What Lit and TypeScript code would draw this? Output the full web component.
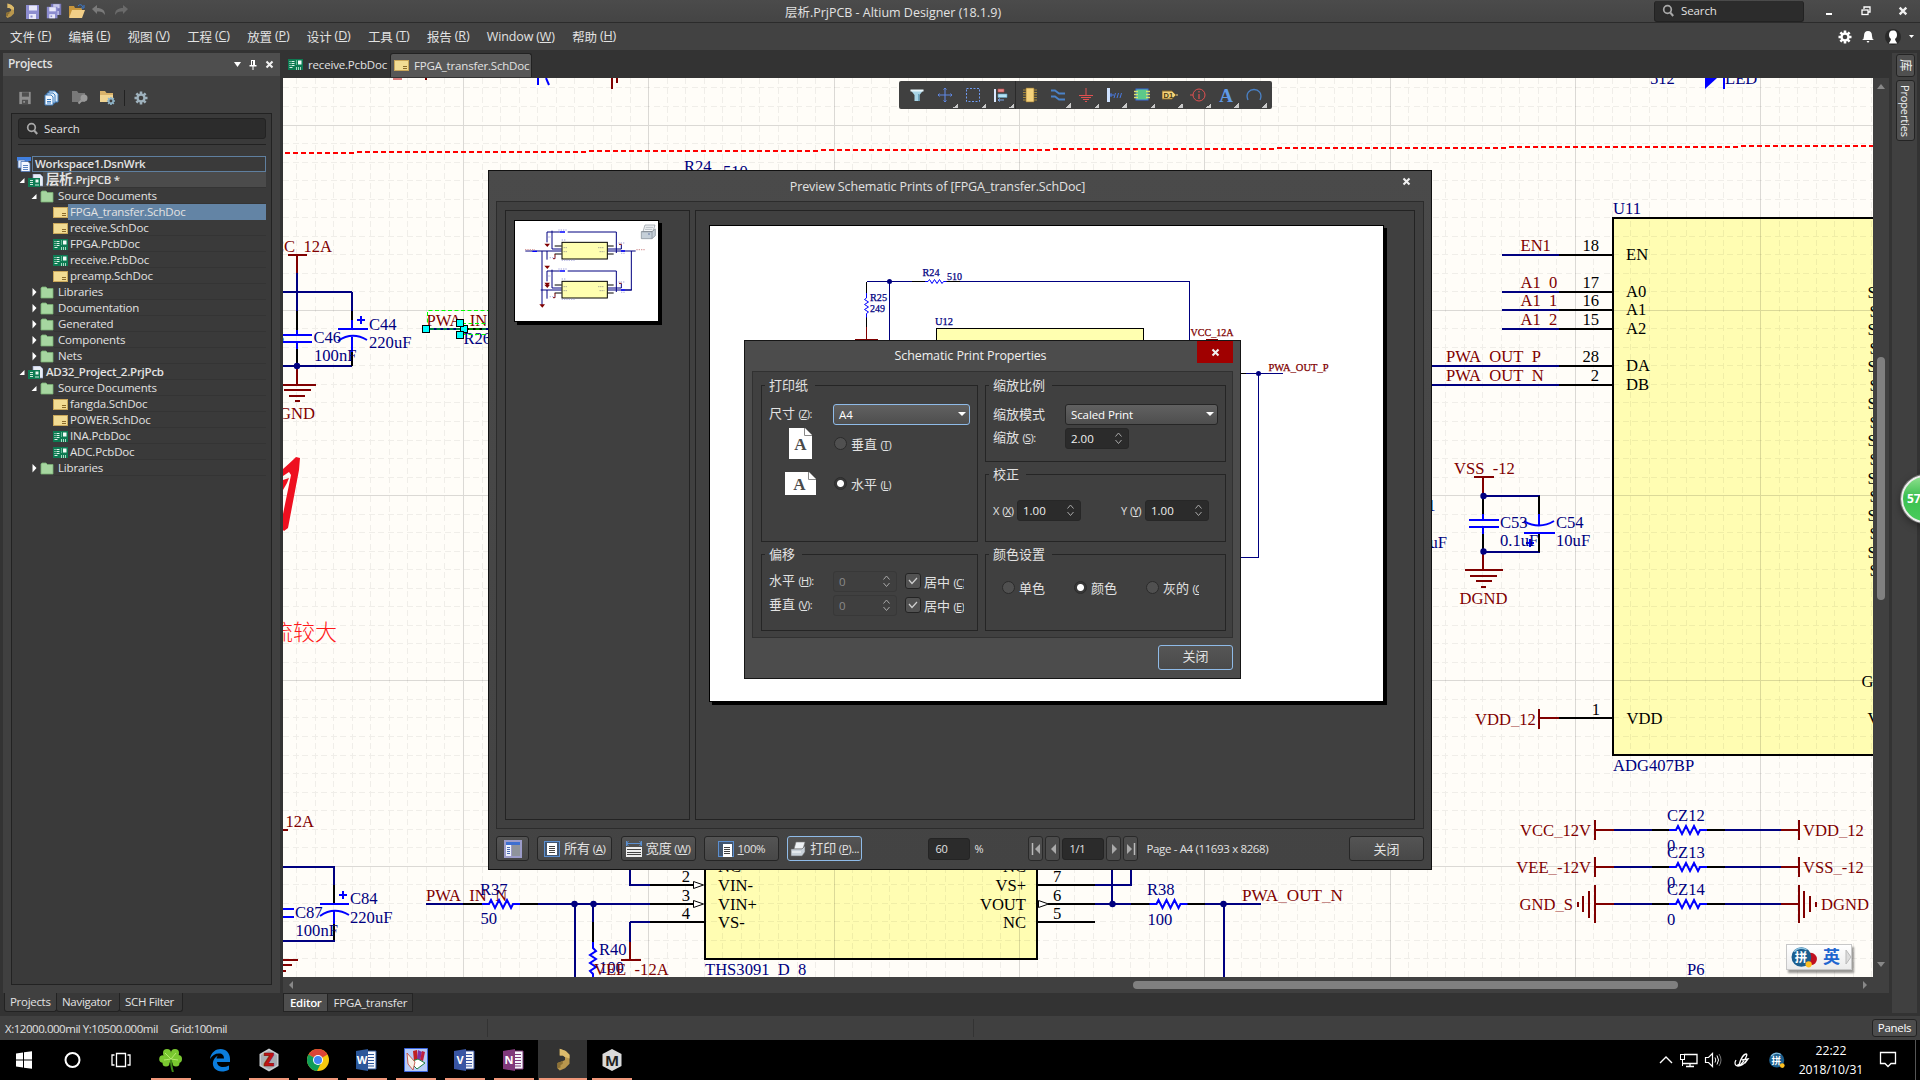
import { LitElement, html, svg, css } from "lit";
import { customElement } from "lit/decorators.js";
import { classMap } from "lit/directives/class-map.js";

const NAVY = "#000080";
const BLUE = "#0000ff";
const RED = "#800000";
const BLACK = "#000000";

const base = css`
  * { box-sizing: border-box; }
  :host {
    font-family: "Open Sans", "Noto Sans CJK SC", sans-serif;
    font-size: 11.5px;
    color: #e2e2e2;
    white-space: nowrap;
  }
  svg { display: block; flex: none; }
  u { text-underline-offset: 1px; }
`;

/* ---------- schematic drawing helpers ---------- */

const wire = (color: string, d: string, w = 2) =>
  svg`<path d=${d} fill="none" stroke=${color} stroke-width=${w} shape-rendering="crispEdges"/>`;
const curve = (color: string, d: string, w = 2) =>
  svg`<path d=${d} fill="none" stroke=${color} stroke-width=${w}/>`;
const node = (x: number, y: number, r = 3.2) => svg`<circle cx=${x} cy=${y} r=${r} fill=${NAVY}/>`;

/* "~" is a blank half-em, "_" is drawn faint */
const label = (x: number, y: number, text: string, color: string, anchor = "start", size = 16.6, len = 0) => {
  const parts = text.replace(/~/g, "\u00a0\u00a0").split("_");
  const body = parts.map((p, i) => (i ? svg`<tspan fill-opacity="0.45">_</tspan>${p}` : svg`${p}`));
  return len
    ? svg`<text x=${x} y=${y} fill=${color} text-anchor=${anchor} font-size=${size} textLength=${len} lengthAdjust="spacingAndGlyphs">${body}</text>`
    : svg`<text x=${x} y=${y} fill=${color} text-anchor=${anchor} font-size=${size}>${body}</text>`;
};
const resistor = (x: number, y: number) =>
  curve(BLUE, `M${x} ${y}h7l2-4 4 8 4-8 4 8 4-8 4 8 2-4h7`);
const plus = (x: number, y: number) => wire(BLUE, `M${x - 4} ${y}h8M${x} ${y - 4}v8`);
const handle = (x: number, y: number) =>
  svg`<rect x=${x - 3.5} y=${y - 3.5} width="7" height="7" fill="#00ffff" stroke="#000" stroke-width="1"/>`;

@customElement("schematic-canvas")
export class SchematicCanvas extends LitElement {
  static styles = [base, css`
    :host { display: block; width: 1590px; height: 899px; overflow: hidden; }
    text { font-family: "Liberation Serif", "Noto Sans CJK SC", serif; white-space: pre; }
    .note { font-family: "Noto Sans CJK SC", sans-serif; font-weight: 300; }
  `];

  private grid() {
    const minor: string[] = [];
    const major: string[] = [];
    for (let i = -2; i < 88; i++) {
      const x = Math.floor(278.2 + i * 18.53) + 0.5;
      if (i % 10 === 0) major.push(`M${x} 78V977`); else minor.push(`M${x} 78V977`);
    }
    for (let i = -3; i < 47; i++) {
      const y = Math.floor(125 + i * 18.53) + 0.5;
      if (i % 10 === 0) major.push(`M283 ${y}H1873`); else minor.push(`M283 ${y}H1873`);
    }
    return svg`
      <path d=${minor.join("")} fill="none" stroke="#000" stroke-opacity="0.06" stroke-dasharray="6 3.5" shape-rendering="crispEdges"/>
      <path d=${major.join("")} fill="none" stroke="#000" stroke-opacity="0.14" shape-rendering="crispEdges"/>`;
  }

  private jumper(y: number, name: string, left: string, right: string, ground = false) {
    return svg`
      ${wire(RED, `M1595 ${y}H1614M1781 ${y}H1799`)}
      ${wire(NAVY, `M1614 ${y}H1652M1725 ${y}H1781`)}
      ${wire(BLACK, `M1652 ${y}H1669M1707 ${y}H1725`)}
      ${resistor(1669, y)}
      ${ground
        ? wire(RED, `M1595 ${y - 19}v38M1589 ${y - 13}v27M1583 ${y - 8}v16M1578 ${y - 2}v5M1799 ${y - 19}v38M1804 ${y - 13}v27M1810 ${y - 8}v16M1816 ${y - 2}v5`)
        : wire(RED, `M1595 ${y - 10}v20M1799 ${y - 10}v20`)}
      ${label(ground ? 1573 : 1591, y + 5.5, left, RED, "end")}
      ${label(ground ? 1821 : 1803, y + 5.5, right, RED)}
      ${label(1667, y - 9.5, name, NAVY)}
      ${label(1667, y + 20.5, "0", NAVY)}`;
  }

  private pin(y: number, net: string, num: string, name: string, x0: number, xt: number) {
    return svg`
      ${wire(NAVY, `M${x0} ${y}H1559`)}${wire(BLACK, `M1559 ${y}H1613`)}
      ${label(xt, y - 3.7, net, RED)}
      ${label(1599, y - 3.7, num, BLACK, "end")}
      ${label(1626, y + 5.2, name, BLACK)}`;
  }

  render() {
    const s = Array.from({ length: 16 }, (_, i) => i);
    return html`<svg width="1590" height="899" viewBox="283 78 1590 899">
      <rect x="283" y="78" width="1590" height="899" fill="#fffdf8"/>
      <rect x="1614" y="218" width="300" height="537" fill="#fffdb2"/>
      <rect x="705" y="840" width="332" height="119" fill="#fffdb2"/>
      ${this.grid()}
      <path d="M285 153H356M357 152H589M589 151H821M821 150H1052M1053 149H1276M1277 148H1508M1509 147H1740M1741 146H1873"
        fill="none" stroke="#f00" stroke-width="2" stroke-dasharray="5 3" shape-rendering="crispEdges"/>

      ${wire("#d98080", "M393 78.5h9")}${wire(RED, "M425.5 78v2M612 78v11M617 78v5")}
      ${wire(BLUE, "M538 78v7")}${curve(BLUE, "M546 78l3 7")}
      ${label(1650, 84, "512", NAVY)}${label(1725, 84, "LED", NAVY)}
      <path d="M1705 78h12l-12 11z" fill=${BLUE}/>${wire(BLUE, "M1724 78v11")}

      ${label(332, 251.5, "VCC~12A", RED, "end")}
      ${wire(RED, "M288 255H307M297 255V273M297 366V385M283 385H316M284 390H311M289 396H305M295 401H300")}
      ${wire(NAVY, "M297 273V311M283 292H352M352 292V311M283 366H352")}
      ${wire(BLACK, "M297 311V330M352 311V320M297 349V366M352 352V366")}
      ${wire(BLUE, "M297 330V335M283 335H312M283 342H312M297 342V349M352 320V329M338 329H368M352 337V352")}
      ${curve(BLUE, "M338 341Q352 331 367 340")}
      ${plus(361, 320)}${node(297, 366)}
      ${label(369, 329.5, "C44", NAVY)}${label(369, 348, "220uF", NAVY)}
      ${label(313.5, 342.5, "C46", NAVY)}${label(314, 361, "100nF", NAVY)}
      ${label(284, 342.5, "C45", NAVY, "end")}
      ${label(315, 419, "DGND", RED, "end")}

      ${label(426.5, 325.5, "PWA~IN~P", RED)}${label(463.5, 344, "R26", NAVY)}
      ${wire(NAVY, "M427 329H464")}${wire(BLACK, "M464 329H482")}${wire(NAVY, "M482 329H490")}
      <path d="M427.5 329V310.5H490M462 323.5H490M462 334.5H490M430 329H490" fill="none" stroke="#00ff00" stroke-dasharray="4 2.5"/>
      ${handle(426, 329)}${handle(464, 329)}${handle(460, 323)}${handle(460, 335)}

      <path d="M283 469Q291 462 296 457L300 458L299 470L288 528L284 531L283 530V514L291 475L289 472L283 476Z" fill="#ee1020"/>
      <path d="M283 480L289 478L287 483L283 490Z" fill="#ee1020"/>
      <text class="note" x="337" y="640" text-anchor="end" font-size="22" fill="#ff1a1a">流较大</text>

      ${label(684, 171.5, "R24", NAVY)}${label(723, 177, "510", NAVY)}

      ${label(314, 826.5, "VCC~12A", RED, "end")}
      ${wire(RED, "M283 830H288M283 960H298M283 965H292M283 971H286")}
      ${wire(NAVY, "M283 867H335M334 867V885M283 941H335")}
      ${wire(BLACK, "M334 885V903M334 924V940")}
      ${wire(BLUE, "M320 904H349M334 911V924M283 909H294M283 917H294")}
      ${curve(BLUE, "M320 916Q334 906 349 915")}${plus(343, 895)}
      ${label(350, 904, "C84", NAVY)}${label(350, 922.5, "220uF", NAVY)}
      ${label(295, 917.5, "C87", NAVY)}${label(295.5, 935.5, "100nF", NAVY)}

      ${label(426, 900.5, "PWA~IN~N", RED)}${label(480, 894.5, "R37", NAVY)}${label(480.5, 924, "50", NAVY)}
      ${wire(NAVY, "M426 904H463M538 904H650M630 860V885M629 885H650M630 922H650M630 922V942M575 904V977M593 904V922")}
      ${wire(BLACK, "M463 904H482M520 904H538M650 904H693M650 885H693M650 922H705M593 922V942")}
      ${resistor(482, 904)}
      ${curve(BLUE, "M593 942v6l3 3-6 4 6 4-6 4 6 4-6 4 3 3v3")}
      ${wire(RED, "M630 942V960M621 960H641")}
      ${node(574.5, 904)}${node(593.5, 904)}
      ${label(599, 954.5, "R40", NAVY)}${label(599, 973, "100", NAVY)}${label(594, 974.5, "VEE~-12A", RED)}
      ${wire(BLACK, "M705 860V959H1037V860")}
      <path d="M693.5 881.5l10 3.5-10 3.5zM693.5 900.5l10 3.5-10 3.5zM1038.500 900.500l10 3.500-10 3.500z" fill="#fff" stroke="#000"/>
      ${label(690, 882, "2", BLACK, "end")}${label(690, 900.500, "3", BLACK, "end")}${label(690, 919, "4", BLACK, "end")}
      ${label(718, 872, "NC", BLACK)}${label(718, 891, "VIN-", BLACK)}${label(718, 909.500, "VIN+", BLACK)}${label(718, 928, "VS-", BLACK)}
      ${label(1026, 872, "NC", BLACK, "end")}${label(1026, 891, "VS+", BLACK, "end")}${label(1026, 909.500, "VOUT", BLACK, "end")}${label(1026, 928, "NC", BLACK, "end")}
      ${label(1053, 882, "7", BLACK)}${label(1053, 900.500, "6", BLACK)}${label(1053, 919, "5", BLACK)}
      ${wire(BLACK, "M1038 885H1095M1048 904H1095M1038 922H1095M1131 904H1150M1187 904H1205")}
      ${wire(NAVY, "M1095 885H1132M1131 860V885M1095 904H1131M1112 860V904M1205 904H1261M1224 904V977")}
      ${resistor(1149.5, 904)}${node(1112.5, 904)}${node(1223.5, 904)}
      ${label(1147, 894.500, "R38", NAVY)}${label(1147.500, 924.500, "100", NAVY)}
      ${label(1242, 900.500, "PWA_OUT_N", RED, "start", 16.600, 101)}
      ${label(705, 975, "THS3091~D~8", NAVY)}

      ${wire(BLACK, "M1900 218H1613V755H1900")}
      ${label(1613, 214, "U11", NAVY)}${label(1613, 771, "ADG407BP", NAVY)}
      ${this.pin(255, "EN1", "18", "EN", 1502, 1520.5)}
      ${this.pin(292, "A1~0", "17", "A0", 1502, 1520.5)}
      ${this.pin(310, "A1~1", "16", "A1", 1502, 1520.5)}
      ${this.pin(329, "A1~2", "15", "A2", 1502, 1520.5)}
      ${this.pin(366, "PWA~OUT~P", "28", "DA", 1432, 1446)}
      ${this.pin(385, "PWA~OUT~N", "2", "DB", 1432, 1446)}
      ${s.map((i) => label(i % 2 ? 1869.5 : 1867.5, 298 + i * 18.55, "S", BLACK))}
      ${label(1861.5, 687, "G", BLACK)}${label(1867.5, 724, "V", BLACK)}

      ${label(1454, 473.5, "VSS~-12", RED)}
      ${wire(RED, "M1474 477H1494M1483 477V496M1483 552V570M1465 570H1503M1470 576H1497M1476 581H1492M1481 587H1486")}
      ${wire(NAVY, "M1483 496H1540M1483 552H1540")}
      ${wire(BLACK, "M1483 496V514M1483 534V552M1539 496V514M1539 534V552")}
      ${wire(BLUE, "M1483 514V520M1469 520H1499M1469 527H1499M1483 527V534M1539 514V526M1524 533H1555")}
      ${curve(BLUE, "M1524 521Q1539 530 1554 521")}${plus(1530, 543)}
      ${node(1483.5, 496)}${node(1483.500, 551.500)}
      ${label(1500, 527.500, "C53", NAVY)}${label(1500, 546, "0.1uF", NAVY)}
      ${label(1556, 527.500, "C54", NAVY)}${label(1556, 546, "10uF", NAVY)}
      ${label(1459.500, 604, "DGND", RED)}
      ${label(1435.500, 511, "1", NAVY, "end")}${label(1447, 548, "uF", NAVY, "end")}

      ${label(1475, 724.500, "VDD_12", RED)}
      ${wire(RED, "M1539 709V729M1539 718H1559")}${wire(BLACK, "M1559 718H1613")}
      ${label(1600, 715, "1", BLACK, "end")}${label(1626.500, 724.300, "VDD", BLACK)}

      ${this.jumper(830, "CZ12", "VCC_12V", "VDD_12")}
      ${this.jumper(867, "CZ13", "VEE_-12V", "VSS_-12")}
      ${this.jumper(904, "CZ14", "GND_S", "DGND", true)}
      ${label(1687, 974.500, "P6", NAVY)}
    </svg>`;
  }
}

/* ---------- small icons ---------- */

const schIcon = svg`<rect x=".5" y="1.500" width="14" height="10" fill="#f2dc93" stroke="#c9a75a"/><path d="M9 7.500h4M9 9.500h4" stroke="#8a6a2a"/>`;
const pcbIcon = svg`<rect x="0" y="1" width="15" height="11" fill="#0d7a52"/><path d="M1.500 3.500h1M3.500 3.500h3M1.500 5.500h1M3.500 5.500h3M1.500 7.500h1M3.500 7.500h3M1.500 9.500h3" stroke="#dff2e9"/><rect x="10" y="2.500" width="3.500" height="4" fill="#f2fbf7"/><path d="M8.500 2v5" stroke="#5fb592"/><path d="M8.500 12V9M10.500 12V9M12.500 12V9" stroke="#a9d8c3"/>`;
const folderIcon = svg`<path d="M1 2l1-1h4l1.500 1.500H13V12H1z" fill="#a6d6a0" stroke="#79b074" stroke-width=".8"/>`;
const projIcon = svg`<path d="M5 0h7l3 3v9H5z" fill="#e9edf6" stroke="#8f9fc4" stroke-width=".7"/><rect x="0" y="4" width="12" height="9" fill="#0d7a52"/><path d="M2 6.500h3M2 8.500h3M2 10.500h3M8 12v-2M10 12v-2" stroke="#cfe8dc"/><rect x="7.500" y="5.500" width="3" height="3" fill="#e8f6ef"/>`;
const wsIcon = svg`<path d="M0 0h14v4H0z" fill="#3f7fe0"/><path d="M1 3h7v8H1z" fill="#dfe9fb" stroke="#4a74b8" stroke-width=".8"/><path d="M4 4.500h7l2 2v8H4z" fill="#f4f8ff" stroke="#4a74b8" stroke-width=".8"/><path d="M6 8.500h5M6 10.500h5M6 12.500h5" stroke="#5a83c0"/>`;
const gear = (c: string, hole: string) => svg`<circle cx="8" cy="8" r="4.600" fill=${c}/><path d="M8 1.500v13M1.500 8h13M3.400 3.400l9.200 9.200M12.600 3.400l-9.200 9.200" stroke=${c} stroke-width="2.600"/><circle cx="8" cy="8" r="2.300" fill=${hole}/>`;
const floppy = (c: string, d: string) => svg`<path d="M1 1h13v14H1z" fill=${c}/><path d="M4 1.500h8v5H4z" fill=${d}/><path d="M4 10h7v5H4z" fill=${d}/><path d="M5.500 11.500h2v2h-2z" fill=${c}/>`;
const altium = svg`<path d="M4.500.5L8.500 2l2.500 2.500v6L8 13.500 4.500 15 3 13.500V10l3-1 2-1V6L6.500 5H4.500z" fill="#b9974d"/><path d="M4.500.5L8.500 2 11 4.500V7L8 6 6.500 5H4.500z" fill="#dcbb6c"/><path d="M3 10l3.500-1.500v2L5 11.500v1.500l-2 .5z" fill="#8c7035"/>`;
const lens = svg`<circle cx="5.500" cy="5.500" r="3.800" fill="none" stroke="#a8a8a8" stroke-width="1.700"/><path d="M8.200 8.500l3 3.500" stroke="#a8a8a8" stroke-width="2"/>`;
const cross = svg`<path d="M1.500 1.500l6 6M7.500 1.500l-6 6" stroke="#f0f0f0" stroke-width="2.100"/>`;

const ico = (body: unknown, w = 16, h = 16, vb = `0 0 ${w} ${h}`) => html`<svg width=${w} height=${h} viewBox=${vb}>${body}</svg>`;

/* ---------- projects panel ---------- */

type Kind = "ws" | "proj" | "folder" | "sch" | "pcb";
interface Row { d: number; k: Kind; t: string; open?: boolean; sel?: boolean }
const rows: Row[] = [
  { d: 0, k: "ws", t: "Workspace1.DsnWrk" },
  { d: 1, k: "proj", t: "层析.PrjPCB *", open: true },
  { d: 2, k: "folder", t: "Source Documents", open: true },
  { d: 3, k: "sch", t: "FPGA_transfer.SchDoc", sel: true },
  { d: 3, k: "sch", t: "receive.SchDoc" },
  { d: 3, k: "pcb", t: "FPGA.PcbDoc" },
  { d: 3, k: "pcb", t: "receive.PcbDoc" },
  { d: 3, k: "sch", t: "preamp.SchDoc" },
  { d: 2, k: "folder", t: "Libraries", open: false },
  { d: 2, k: "folder", t: "Documentation", open: false },
  { d: 2, k: "folder", t: "Generated", open: false },
  { d: 2, k: "folder", t: "Components", open: false },
  { d: 2, k: "folder", t: "Nets", open: false },
  { d: 1, k: "proj", t: "AD32_Project_2.PrjPcb", open: true },
  { d: 2, k: "folder", t: "Source Documents", open: true },
  { d: 3, k: "sch", t: "fangda.SchDoc" },
  { d: 3, k: "sch", t: "POWER.SchDoc" },
  { d: 3, k: "pcb", t: "INA.PcbDoc" },
  { d: 3, k: "pcb", t: "ADC.PcbDoc" },
  { d: 2, k: "folder", t: "Libraries", open: false },
];
const kindIcon = { ws: wsIcon, proj: projIcon, folder: folderIcon, sch: schIcon, pcb: pcbIcon };

@customElement("projects-panel")
export class ProjectsPanel extends LitElement {
  static styles = [base, css`
    :host { display: flex; flex-direction: column; width: 277px; height: 940px; background: #404040; }
    .head { height: 23px; background: #4e4e4e; display: flex; align-items: center; padding: 0 6px 0 5px; font-weight: 600; font-size: 12px; gap: 8px; }
    .head span { flex: 1; letter-spacing: -0.3px; line-height: 21px; height: 23px; }
    .tools { height: 37px; display: flex; align-items: center; gap: 12px; padding: 7px 0 0 15px; }
    .sep { width: 1px; height: 16px; background: #222; margin: 0 -4px; }
    .box { width: 261px; height: 872px; margin-left: 8px; border: 1px solid #222; background: #3a3a3a; padding: 4px 5px 0 5px; }
    .search { height: 21px; background: #2c2c2c; border: 1px solid #232323; border-radius: 3px; display: flex; align-items: center; gap: 7px; padding: 0 0 1px 7px; margin-left: 1px; }
    .search span { letter-spacing: -0.1px; margin-left: -1px; }
    .line { height: 1px; background: #222; margin: 5px 0 11px 1px; }
    .row { height: 16px; display: flex; align-items: center; }
    .d1 { padding-left: 2px; } .d2 { padding-left: 14px; } .d3 { padding-left: 36px; }
    .arrow { width: 9px; height: 12px; flex: none; }
    .t { flex: 1; height: 16px; line-height: 15px; border-bottom: 1px solid #343434; padding-left: 2px; letter-spacing: -0.17px; }
    .d2 .t { padding-left: 4px; }
    .sel .t { background: #6384a5; border-color: #6384a5; }
    .proj .t, .ws .t { font-weight: 600; letter-spacing: -0.25px; }
    .proj .t { padding-left: 3px; }
    .hot .t { background: #4b4b4b; }
    .ws .t { border: 1px solid #5f7f9f; line-height: 14px; padding-left: 2px; }
    .cn { font-size: 13.5px; }
  `];
  render() {
    return html`
      <div class="head"><span>Projects</span>
        ${ico(svg`<path d="M0 1h7l-3.500 5z" fill="#fff"/>`, 7, 7)}
        ${ico(svg`<path d="M2 0h4v5h1.500v1.500H.5V5H2zM3.500 6h1v4h-1z" fill="#fff"/><path d="M3.500 1v4" stroke="#4e4e4e"/>`, 8, 10)}
        ${ico(cross, 9, 9)}
      </div>
      <div class="tools">
        ${ico(floppy("#8f8f8f", "#505050"), 14, 14, "0 0 15 16")}
        ${ico(svg`<path d="M5 1h6l3 3v8H5z" fill="#dcebf8" stroke="#3f7fc0"/><path d="M3 3h6l2 2v8H3z" fill="#dcebf8" stroke="#3f7fc0"/><path d="M1 5h6l2 2v8H1z" fill="#f2f8ff" stroke="#3f7fc0"/><path d="M3 9.500h4M3 11.500h4M3 13h4" stroke="#3f7fc0"/>`)}
        ${ico(svg`<path d="M0 1h5l1.500 2H13v9H0z" fill="#787878"/><circle cx="12" cy="8" r="3.500" fill="#9a9a9a"/><path d="M9.500 10.500l-3 3" stroke="#9a9a9a" stroke-width="2"/>`)}
        ${ico(svg`<path d="M0 1h5l1.500 2H13v9H0z" fill="#d9b26a"/><path d="M0 5h13v7H0z" fill="#f0d492"/><g transform="translate(6 6) scale(.62)">${gear("#8fb4c8", "#404040")}</g>`)}
        <div class="sep"></div>
        ${ico(gear("#9fb2bd", "#404040"))}
      </div>
      <div class="box">
        <div class="search">${ico(lens, 12, 13)}<span>Search</span></div>
        <div class="line"></div>
        ${rows.map((r, i) => html`<div class=${classMap({ row: true, [`d${r.d}`]: true, [r.k]: true, sel: !!r.sel, hot: i === 1 })}>
          ${r.open === undefined ? "" : html`<svg class="arrow" viewBox="0 0 9 12">${r.open
            ? svg`<path d="M5.500 4v5h-5z" fill="#fff"/>` : svg`<path d="M1.500 2l4 4-4 4.500z" fill="#fff"/>`}</svg>`}
          ${ico(kindIcon[r.k], r.k === "folder" ? 14 : 15, r.k === "ws" ? 15 : 13)}
          <div class="t">${i === 1 ? html`<span class="cn">层析</span>.PrjPCB *` : r.t}</div>
        </div>`)}
      </div>`;
  }
}

/* ---------- print preview window ---------- */

@customElement("print-preview")
export class PrintPreview extends LitElement {
  static styles = [base, css`
    :host { display: flex; flex-direction: column; width: 944px; height: 700px; border: 1px solid #111; background: linear-gradient(#4a4a4a, #434343); padding: 0 7px; font-size: 12px; }
    .title { height: 30px; display: flex; align-items: center; font-size: 12.5px; }
    .title span { flex: 1; text-align: center; padding-right: 23px; letter-spacing: -0.12px; line-height: 29px; }
    .x { align-self: flex-start; padding: 6px 0 0 0; width: 22px; }
    .inner { height: 628px; border: 1px solid #2c2c2c; background: #404040; display: flex; gap: 5px; padding: 8px; }
    .pane { border: 1px solid #232323; }
    .left { width: 185px; padding: 9px 0 0 8px; }
    .right { width: 721px; padding: 14px 0 0 13px; }
    .sheet { background: #fff; border: 1px solid #000; }
    .thumb { width: 145px; height: 102px; box-shadow: 3px 3px 0 #000; }
    .page { width: 675px; height: 477px; box-shadow: 3px 3px 0 #000; }
    .page text { font-family: "Liberation Serif", serif; stroke-width: .25px; paint-order: stroke; }
    .bar { display: flex; align-items: center; height: 39px; }
    .btn { height: 25px; border: 1px solid #262626; border-radius: 3px; background: linear-gradient(#545454, #484848); display: flex; align-items: center; justify-content: center; gap: 4px; margin-right: 8.300px; width: 75px; font-size: 11.5px; letter-spacing: -0.4px; line-height: 22px; }
    .btn b { font-weight: 400; font-size: 13px; letter-spacing: 0; }
    .btn.ic { width: 33px; }
    .btn.hot { border-color: #8fbbe8; }
    .btn.last { margin: 0 0 0 auto; }
    .field { width: 42px; height: 22px; background: #2b2b2b; border: 1px solid #242424; border-radius: 3px; font-size: 11px; display: flex; align-items: center; padding-left: 6px; letter-spacing: -0.3px; }
    .nav { width: 15px; height: 25px; border: 1px solid #2a2a2a; border-radius: 3px; background: #4c4c4c; display: flex; align-items: center; justify-content: center; margin-right: 2px; }
    .zoom { margin-left: 58px; }
    .pct { width: 58px; padding-left: 4px; font-size: 11px; }
    .pages { margin: 0 2px 0 0; }
    .info { padding-left: 6px; font-size: 11.5px; letter-spacing: -0.36px; }
  `];
  private half(dy: number, extra: number) {
    return svg`<g transform=${`translate(0 ${dy})`}>
      <path d="M202 248V217H240M264 217H410V280M217 213V268H246M137 274H246M202 274V300M384 268H425V255M384 274H468" fill="none" stroke="#000080" stroke-width="3"/>
      <path d="M225 259H246M225 283H246M384 259H402M384 283H402" stroke="#000" stroke-width="3"/>
      <path d="M240 217H256M158 275H172M424 274H436" stroke="#0000ff" stroke-width="4"/>
      <path d="M226 283v14h-6M418 254h8" fill="none" stroke="#800000" stroke-width="3"/>
      <path d="M194 252h17l-8 10zM194 ${318 - extra}h17l-8 10z" fill="#800000"/>
      <rect x="247" y="248" width="136" height="50" fill="#ffffb0" stroke="#000" stroke-width="3"/>
      <path d="M236 211h28M206 232h10M246 241h12M416 250h20M210 294h18M246 302h40M424 281h14" stroke="#9a9ad8" stroke-width="4" stroke-dasharray="4 3" opacity=".6"/>
      <path d="M252 264h12M356 264h18M252 276h12M360 276h14" stroke="#888" stroke-width="3" stroke-dasharray="3 3"/>
    </g>`;
  }
  render() {
    return html`
      <div class="title"><span>Preview Schematic Prints of [FPGA_transfer.SchDoc]</span><div class="x">${ico(cross, 9, 9)}</div></div>
      <div class="inner">
        <div class="pane left"><div class="sheet thumb">
          <svg width="143" height="100" viewBox="106 184 429 300">
            ${this.half(0, 0)}${this.half(117, 60)}
            <rect x="133" y="380" width="50" height="24" fill="#fff"/>
            <rect x="457" y="380" width="30" height="24" fill="#fff"/>
            <path d="M187 274V436M455 274V391H436" fill="none" stroke="#000080" stroke-width="3"/>
            <path d="M179 434h17l-8 10z" fill="#800000"/>
            <path d="M136 270h30M470 270h28" stroke="#d8a0a0" stroke-width="4" stroke-dasharray="4 3"/>
            <path d="M496 196h30l-6 20h-30z" fill="#f2f4f6" stroke="#8a929a" stroke-width="2"/>
            <path d="M498 203h22M496 209h22" stroke="#9aa2aa" stroke-width="2"/>
            <path d="M485 216h32l10-8v20l-10 9h-32z" fill="#c5cfd8" stroke="#7d868f" stroke-width="2"/>
            <path d="M485 216h32v21" fill="none" stroke="#7d868f" stroke-width="2"/><circle cx="508" cy="223" r="2" fill="#405a90"/>
          </svg></div></div>
        <div class="pane right"><div class="sheet page">
          <svg width="673" height="475" viewBox="710 226 673 475">
            <rect x="936.500" y="328.500" width="207" height="60" fill="#ffffb0" stroke="#000"/>
            ${wire(NAVY, "M866.500 281.500H925M957 281.500H1189.500V345M889.500 281.500V345M1258.500 373.500V557.500H1241M1246 373.500H1283", 1)}
            ${wire(BLACK, "M866.500 282V293M866.500 315V327M912 281.500H925M945 281.500H960M1241 373.500H1246", 1)}
            ${wire(RED, "M866.500 327V339.500M855 339.500H878M1206 339.500H1218", 1)}
            ${curve(BLUE, "M925 281.500h3l1.500-2 2.500 4 2.500-4 2.500 4 2.500-4 2.500 4 1.500-2h3M866.500 293v5l-2 1.500 4 2.500-4 2.500 4 2.500-4 2.500 4 2.500-2 1.500v4", 1)}
            ${node(889.500, 281.500, 2.500)}${node(1258.500, 373.500, 2.500)}
            <g stroke=${NAVY}>
              ${label(922.500, 275.500, "R24", NAVY, "start", 10.500, 17)}
              ${label(947, 279.500, "510", NAVY, "start", 10.500, 15)}
              ${label(870, 301, "R25", NAVY, "start", 10.500, 17)}
              ${label(870, 312, "249", NAVY, "start", 10.500, 15)}
              ${label(935, 325, "U12", NAVY, "start", 10.500, 18)}
            </g>
            <g stroke=${RED}>
              ${label(1190.500, 336, "VCC_12A", RED, "start", 10.500, 43)}
              ${label(1268.500, 371, "PWA_OUT_P", RED, "start", 10.500, 60)}
            </g>
          </svg></div></div>
      </div>
      <div class="bar">
        <div class="btn ic">${ico(svg`<rect width="18" height="18" fill="#9c9cc8"/><path d="M2 2h14v3H2z" fill="#3d6fd0"/><path d="M2 5h5v11H2z" fill="#eef2fb"/><path d="M8 5h8v11H8z" fill="#8f949b"/><path d="M3 7.500h3M3 9.500h3M3 11.500h3M3 13.500h3" stroke="#4a6ab0"/>`, 18, 18)}</div>
        <div class="btn">${ico(svg`<rect x=".5" y=".5" width="15" height="15" fill="#42556e" stroke="#5b8fd0"/><path d="M3 2h10v12H3z" fill="#fff"/><path d="M5 5.500h6M5 7.500h6M5 9.500h6M5 11.500h6" stroke="#444"/>`)}<span><b>所有</b> (<u>A</u>)</span></div>
        <div class="btn">${ico(svg`<path d="M0 2.500h16M2.500 0L.5 2.500l2 2.500M13.500 0l2 2.500-2 2.500M.5 0v5M15.500 0v5" fill="none" stroke="#5b8fd0"/><path d="M0 6h16v10H0z" fill="#eee"/><path d="M1 8.500h14M1 11.500h14M1 13.500h14" stroke="#444"/>`)}<span><b>宽度</b> (<u>W</u>)</span></div>
        <div class="btn">${ico(svg`<rect x=".5" y=".5" width="15" height="15" fill="#42556e" stroke="#5b8fd0"/><path d="M5 3h9v13H5z" fill="#fff"/><path d="M6 6.500h6M6 8.500h6M6 10.500h6M6 12.500h6" stroke="#444"/>`)}<span><u>1</u>00%</span></div>
        <div class="btn hot">${ico(svg`<path d="M6 1h9l-2 7H4z" fill="#eef1f4" stroke="#777" stroke-width=".6"/><path d="M1 8h11l3-3v6l-3 4H1z" fill="#c9d2da" stroke="#666" stroke-width=".6"/><path d="M2 11h9" stroke="#fff"/>`)}<span><b>打印</b> (<u>P</u>)...</span></div>
        <div class="field zoom">60</div><div class="pct">%</div>
        <div class="nav">${ico(svg`<path d="M1.500 0v12" stroke="#bbb" stroke-width="1.500"/><path d="M9 1v10L4 6z" fill="#aaa"/>`, 10, 12)}</div>
        <div class="nav">${ico(svg`<path d="M8 1v10L3 6z" fill="#aaa"/>`, 10, 12)}</div>
        <div class="field pages">1/1</div>
        <div class="nav">${ico(svg`<path d="M3 1v10l5-5z" fill="#aaa"/>`, 10, 12)}</div>
        <div class="nav">${ico(svg`<path d="M8.500 0v12" stroke="#bbb" stroke-width="1.500"/><path d="M1 1v10l5-5z" fill="#aaa"/>`, 10, 12)}</div>
        <div class="info">Page - A4 (11693 x 8268)</div>
        <div class="btn last"><b>关闭</b></div>
      </div>`;
  }
}

/* ---------- print properties window ---------- */

@customElement("print-properties")
export class PrintProperties extends LitElement {
  static styles = [base, css`
    :host { display: flex; flex-direction: column; width: 497px; height: 339px; border: 1px solid #161616; background: #4c4c4c; padding: 0 7px; font-size: 13px; }
    .title { height: 30px; display: flex; font-size: 12.5px; color: #f0f0f0; }
    .title span { flex: 1; text-align: center; line-height: 29px; padding-right: 44px; letter-spacing: -0.1px; }
    .x { width: 36px; height: 22px; background: #a00000; display: flex; align-items: center; justify-content: center; margin-left: -36px; }
    .inner { height: 267px; border: 1px solid #313131; background: #404040; display: flex; gap: 7px; padding: 13px 6px 0 8px; }
    .col { display: flex; flex-direction: column; gap: 12px; width: 217px; }
    .col.wide { width: 241px; }
    .g { border: 1px solid #252525; padding: 0 7px; display: flex; flex-direction: column; }
    .h157 { height: 157px; } .h77 { height: 77px; } .h68 { height: 68px; }
    .lg { align-self: flex-start; height: 20px; line-height: 19px; margin: -10px 0 0 -4px; padding: 0 7px 0 4px; background: #404040; }
    small { font-size: 11px; letter-spacing: -0.6px; }
    .r { display: flex; align-items: center; }
    .lab { width: 64px; line-height: 18px; padding-bottom: 1px; }
    .wide .lab { width: 72px; }
    .sel { height: 21px; border: 1px solid #262626; border-radius: 3px; background: linear-gradient(#616161, #4e4e4e); display: flex; align-items: center; justify-content: space-between; padding: 0 3px 0 5px; font-size: 11.5px; color: #fff; letter-spacing: -0.1px; }
    .sel.a { width: 137px; border-color: #8fbbe8; }
    .sel.b { width: 153px; }
    .spin { width: 64px; height: 21px; border: 1px solid #272727; border-radius: 3px; background: #2b2b2b; display: flex; align-items: center; justify-content: space-between; padding: 0 6px 0 5px; font-size: 11.5px; color: #f0f0f0; }
    .spin.off { background: #3f3f3f; color: #8a8a8a; border-color: #383838; }
    .m11 { margin-top: 7px; height: 22px; } .m3 { margin-top: 2px; height: 22px; }
    .radio { width: 13px; height: 13px; border-radius: 50%; background: #505050; border: 1px solid #2b2b2b; margin-right: 4px; flex: none; }
    .radio.on { background: radial-gradient(circle, #fff 0 3px, #383838 4px); }
    .pic { width: 65px; display: flex; justify-content: center; padding-right: 2px; }
    .chk { width: 16px; height: 16px; border: 1px solid #242424; border-radius: 3px; background: #525252; margin: 0 3px 0 8px; flex: none; }
    .clip { width: 40px; overflow: hidden; }
    .clip.gray { width: 36px; }
    .xy { margin-top: 14px; height: 22px; font-size: 11px; }
    .xy span { width: 24px; } .xy .y { margin-left: 40px; }
    .p1 { height: 32px; margin-top: 2px; } .p2 { height: 24px; margin-top: 12px; }
    .o1 { height: 24px; margin-top: 4px; } .o2 { height: 24px; }
    .colors { margin-top: 10px; height: 24px; padding-left: 9px; }
    .colors span { width: 55px; }
    .foot { display: flex; justify-content: flex-end; padding-top: 7px; }
    .close { width: 75px; height: 25px; border: 1px solid #8fbbe8; border-radius: 3px; background: linear-gradient(#565656, #4a4a4a); text-align: center; line-height: 21px; }
  `];
  private spin(v: string, off = false) {
    return html`<div class=${classMap({ spin: true, off })}>${v}${ico(svg`<path d="M.5 4.500l3-3.500 3 3.500M.5 8l3 3.500 3-3.500" fill="none" stroke="#a8a8a8"/>`, 7, 13)}</div>`;
  }
  private caret = ico(svg`<path d="M0 1h8L4 5z" fill="#fff"/>`, 8, 6);
  private check = html`<div class="chk">${ico(svg`<path d="M3 6l3 3.500L11 4" fill="none" stroke="#d0d0d0" stroke-width="1.200"/>`, 14, 14)}</div>`;
  render() {
    return html`
      <div class="title"><span>Schematic Print Properties</span><div class="x">${ico(cross, 9, 9)}</div></div>
      <div class="inner">
        <div class="col">
          <div class="g h157"><div class="lg">打印纸</div>
            <div class="r m11"><div class="lab">尺寸 <small>(<u>Z</u>):</small></div><div class="sel a">A4${this.caret}</div></div>
            <div class="r p1"><div class="pic"><svg width="23" height="31" viewBox="0 0 23 31"><path d="M0 0h16l7 7v24H0z" fill="#fff"/><path d="M15.500 0v7.500H23" fill="none" stroke="#888"/><text x="11.500" y="22" text-anchor="middle" font-family="Liberation Serif" font-weight="700" font-size="17" fill="#4a4a4a">A</text></svg></div><div class="radio"></div><span>垂直 <small>(<u>T</u>)</small></span></div>
            <div class="r p2"><div class="pic"><svg width="31" height="23" viewBox="0 0 31 23"><path d="M0 0h24l7 7v16H0z" fill="#fff"/><path d="M23.500 0v7.500H31" fill="none" stroke="#888"/><text x="14.500" y="18" text-anchor="middle" font-family="Liberation Serif" font-weight="700" font-size="17" fill="#4a4a4a">A</text></svg></div><div class="radio on"></div><span>水平 <small>(<u>L</u>)</small></span></div>
          </div>
          <div class="g h77"><div class="lg">偏移</div>
            <div class="r o1"><div class="lab">水平 <small>(<u>H</u>):</small></div>${this.spin("0", true)}${this.check}<div class="clip">居中 <small>(<u>C</u>)</small></div></div>
            <div class="r o2"><div class="lab">垂直 <small>(<u>V</u>):</small></div>${this.spin("0", true)}${this.check}<div class="clip">居中 <small>(<u>E</u>)</small></div></div>
          </div>
        </div>
        <div class="col wide">
          <div class="g h77"><div class="lg">缩放比例</div>
            <div class="r m11"><div class="lab">缩放模式</div><div class="sel b">Scaled Print${this.caret}</div></div>
            <div class="r m3"><div class="lab">缩放 <small>(<u>S</u>):</small></div>${this.spin("2.00")}</div>
          </div>
          <div class="g h68"><div class="lg">校正</div>
            <div class="r xy"><span>X <small>(<u>X</u>)</small></span>${this.spin("1.00")}<span class="y">Y <small>(<u>Y</u>)</small></span>${this.spin("1.00")}</div>
          </div>
          <div class="g h77"><div class="lg">颜色设置</div>
            <div class="r colors"><div class="radio"></div><span>单色</span><div class="radio on"></div><span>颜色</span><div class="radio"></div><div class="clip gray">灰的 <small>(<u>G</u>)</small></div></div>
          </div>
        </div>
      </div>
      <div class="foot"><div class="close">关闭</div></div>`;
  }
}

/* ---------- floating tool strip ---------- */

const strip: [unknown, boolean][] = [
  [svg`<path d="M1.500 3h13l-4 5v6h-5V8z" fill="#a8d4e6"/><path d="M1.500 2.500h13v2h-13z" fill="#e8f6fb"/><path d="M9 7v7h1.500V7z" fill="#6fa6c0"/>`, false],
  [svg`<path d="M8 1v14M1 8h14" stroke="#5f86e0" stroke-width="1.100"/><path d="M6.500 2.500L8 1l1.500 1.500M6.500 13.500L8 15l1.500-1.500M2.500 6.500L1 8l1.500 1.500M13.500 6.500L15 8l-1.500 1.500" fill="none" stroke="#5f86e0"/>`, true],
  [svg`<rect x="1.500" y="1.500" width="13" height="13" fill="none" stroke="#6f9af0" stroke-dasharray="2 1.500"/>`, true],
  [svg`<path d="M2 2v13" stroke="#dbe9ff" stroke-width="2"/><path d="M5 2h6v3H5z" fill="#e88a8a" stroke="#b84a4a" stroke-width=".6"/><path d="M5 7h9v3.500H5z" fill="#b5e2f2" stroke="#5a9ac0" stroke-width=".6"/><path d="M5 13h6M7 11.500L5 13l2 1.500" stroke="#7da6e8" fill="none"/>`, true],
  [svg`<path d="M1 3h14M1 5.500h14M1 8h14M1 10.500h14M1 13h14" stroke="#a88a3a"/><path d="M4 1h8v14H4z" fill="#f5d27a" stroke="#8a6a2a" stroke-width=".6"/>`, false],
  [svg`<path d="M1 3.500h4l4 3h6M1 9.500h4l4 3h6" fill="none" stroke="#4a82c8" stroke-width="1.800"/>`, true],
  [svg`<path d="M8 1v7M1 8.500h14M3 10.500h10M5 12.500h6M7 14.500h2" stroke="#e05050"/>`, true],
  [svg`<path d="M1 1h3v14H1z" fill="#cfe2ff"/><path d="M4 8h4M8 11l1.500-5M11 11l1.500-5M14 11l1.500-5M5 6v4" stroke="#4a7ae0"/>`, true],
  [svg`<rect x="2" y="2" width="12" height="11" fill="#5cc88a" stroke="#3a6ae0"/><path d="M0 4.500h4M0 7.500h4M0 10.500h4M12 4.500h4M12 7.500h4M12 10.500h4" stroke="#d8e070" stroke-width="1.500"/>`, true],
  [svg`<path d="M0 4h10l4 4-4 4H0z" fill="#f5d27a" stroke="#8a6a2a"/><path d="M14 8h2" stroke="#f5d27a"/><text x="1.500" y="11" font-size="7.500" font-weight="700" font-family="Liberation Sans" fill="#4a3a10">D1</text>`, true],
  [svg`<circle cx="9" cy="8" r="6" fill="none" stroke="#e05050"/><path d="M0 8h3M9 7v5M9 4v1.500" stroke="#e05050" stroke-width="1.200"/>`, true],
  [svg`<text x="8" y="14.500" text-anchor="middle" font-size="19" font-weight="700" font-family="Liberation Serif" fill="#5f9ae8">A</text>`, true],
  [svg`<path d="M2 13C-1 6 4 2.500 8 2.500S17 6 14 13" fill="none" stroke="#4a82c8" stroke-width="1.300"/>`, true],
];

/* ---------- task bar ---------- */

const office = (c: string, l: string) => svg`<path d="M11 3h10v18H11z" fill="#f4f6fb" stroke=${c}/><path d="M13 6.500h6M13 9.500h6M13 12.500h6M13 15.500h6M13 18h6" stroke=${c}/><path d="M1 3l12-2v22L1 21z" fill=${c}/><text x="7" y="16" text-anchor="middle" font-size="11" font-weight="700" font-family="Open Sans" fill="#fff">${l}</text>`;
const hex = (bg: string, fg: string, l: string) => svg`<path d="M12 1l9.500 5v12L12 23l-9.500-5V6z" fill=${bg}/><text x="12" y="17.500" text-anchor="middle" font-size="15" font-weight="700" font-family="Open Sans" fill=${fg}>${l}</text>`;
const ime = svg`<circle cx="10" cy="10" r="9.500" fill="#1c5f8f"/><path d="M3 5a9 9 0 0 1 12-2" stroke="#8fc4e0" fill="none" stroke-width="1.500"/><text x="9.500" y="14.500" text-anchor="middle" font-size="12" font-weight="700" font-family="Noto Sans CJK SC" fill="#fff">拼</text><circle cx="17" cy="17" r="3" fill="#ffc020"/>`;

const apps: { i: unknown; run?: boolean; on?: boolean }[] = [
  { i: svg`<path d="M4 5.500l7-1v7H4zM12 4.300l8-1.100v8.300h-8zM4 12.500h7v7l-7-1zM12 12.500h8v8.300l-8-1.100z" fill="#fff"/>` },
  { i: svg`<circle cx="11.500" cy="12" r="7" fill="none" stroke="#fff" stroke-width="2"/>` },
  { i: svg`<path d="M6.500 5.500h9v13h-9zM4.500 7H2v10h2.500M17.500 7H20v10h-2.500" fill="none" stroke="#fff" stroke-width="1.300"/>` },
  { i: svg`<g fill="#7ac830"><circle cx="8" cy="5" r="4"/><circle cx="16" cy="5" r="4"/><circle cx="4" cy="11" r="3.800"/><circle cx="19" cy="11" r="4"/><circle cx="7" cy="15" r="3.500"/><circle cx="17" cy="15" r="3.500"/><circle cx="12" cy="10" r="5"/></g><path d="M12 11q0 8 2 13" stroke="#3f8a18" stroke-width="2" fill="none"/><path d="M6 5l6 6 5-6M5 12l7-1 7 1" stroke="#b5ea70" fill="none"/>`, run: true },
  { i: svg`<path d="M2 11C3 4 8 1 12.500 1 18 1 22 5 22 11v3H9c0 3 3 5 6 5 2 0 4-.5 6-1.500v4C19 23 16 23.500 14 23.500 8 23.500 4 19 5 14c.5-3 2.500-5 5-6.500-1 1-1.500 2-1.500 3H16c0-3-1.500-5-5-5-4 0-7 2-9 5.500z" fill="#0b7ddd"/>` },
  { i: svg`<path d="M12 .5l9.500 5.500v12L12 23.500 2.500 18V6z" fill="#c8ccd0"/><path d="M12 2.500l8 4.500v10l-8 4.500L4 17V7z" fill="#a8adb2"/><text x="12" y="18" text-anchor="middle" font-size="17" font-weight="800" font-family="Open Sans" fill="#c01414" stroke="#7a0808" stroke-width=".6">Z</text>`, run: true },
  { i: svg`<circle cx="12" cy="12" r="11" fill="#f6c90e"/><path d="M12 12L2.500 6.500A11 11 0 0 1 21.500 6.500z" fill="#db4437"/><path d="M12 12L2.500 6.500A11 11 0 0 0 11 23l4.500-9z" fill="#0f9d58"/><circle cx="12" cy="12" r="5" fill="#fff"/><circle cx="12" cy="12" r="4" fill="#4285f4"/>`, run: true },
  { i: office("#2b579a", "W"), run: true },
  { i: svg`<path d="M.5.500h23v23H.5z" fill="#b8ccf8" stroke="#3a66e0"/><path d="M9 3l4-1 1 10-4 1z" fill="#c02020"/><path d="M14 2l4 2-2 9-3-1z" fill="#8030a0"/><path d="M18 3l3 1-2 9-3-1z" fill="#c02040"/><path d="M6 14l8-3 7 4-8 6z" fill="#fff" stroke="#208040"/><path d="M3 5l8 9-2 8-5-6z" fill="#f6f0e8" stroke="#c04030" stroke-width=".8"/>`, run: true },
  { i: office("#3955a3", "V"), run: true },
  { i: office("#80397b", "N"), run: true },
  { i: svg`<g transform="translate(2 0) scale(1.500)">${altium}</g>`, run: true, on: true },
  { i: hex("#dadada", "#222", "M"), run: true },
];

@customElement("app-root")
export class AppRoot extends LitElement {
  static styles = [base, css`
    :host { display: flex; flex-direction: column; position: relative; width: 1920px; height: 1080px; overflow: hidden; background: #333; }
    .titlebar { height: 23px; background: linear-gradient(#4b4b4b, #444); border-bottom: 1px solid #2b2b2b; display: flex; align-items: center; justify-content: space-between; }
    .quick { display: flex; gap: 6px; padding-left: 3px; width: 785px; align-items: center; }
    .cap { flex: 1; font-size: 12.5px; letter-spacing: -0.02px; }
    .find { width: 150px; height: 21px; background: #2c2c2c; border: 1px solid #222; border-top: 0; border-radius: 3px; display: flex; align-items: center; gap: 7px; padding: 0 0 1px 7px; margin-right: 21px; letter-spacing: -0.1px; }
    .win { display: flex; gap: 27px; align-items: center; padding-right: 12px; }
    .menu { height: 27px; background: #424242; display: flex; align-items: center; padding: 0 5px 0 10px; font-size: 12.5px; }
    .menu .m { margin-right: 17.300px; display: flex; gap: 3px; letter-spacing: -0.12px; }
    .menu .sp { flex: 1; }
    .menu .ic { display: flex; gap: 8.500px; align-items: center; }
    .work { height: 966px; display: flex; padding: 3px 3px 0; }
    .side { width: 277px; }
    .ptabs, .etabs { display: flex; height: 19px; font-size: 11.5px; letter-spacing: -0.2px; }
    .ptabs div { border: 1px solid #222; border-top: 0; border-radius: 0 0 3px 3px; padding: 0 5px; line-height: 18px; margin-right: -1px; background: #383838; letter-spacing: -0.3px; width: 64px; }
    .ptabs { padding-left: 1px; }
    .ptabs .on { background: #404040; width: 53px; }
    .etabs div { border: 1px solid #242424; padding: 0 5px; line-height: 17px; margin-right: -1px; background: #383838; }
    .etabs .on { background: #4e4e4e; font-weight: 600; padding: 0 5px 0 6px; color: #fff; letter-spacing: -0.3px; }
    .etabs .f { padding-left: 6px; }
    .doc { width: 1606px; margin-left: 3px; display: flex; flex-direction: column; }
    .dtabs { height: 25px; display: flex; letter-spacing: -0.18px; }
    .dtabs div { display: flex; align-items: center; gap: 5px; height: 24px; padding: 0 0 1px 5px; width: 107px; }
    .dtabs .on { background: #575757; border: 1px solid #222; border-bottom: 0; border-radius: 3px 3px 0 0; width: 142px; padding: 0 0 1px 3px; gap: 5px; }
    .view { display: flex; height: 899px; }
    .vs { width: 16px; background: #404040; display: flex; flex-direction: column; align-items: center; padding-top: 6px; }
    .vth { width: 8px; height: 243px; border-radius: 4px; background: #808080; margin: 267px 0 362px; }
    .hs { height: 16px; background: #404040; display: flex; align-items: center; padding-left: 5px; }
    .hth { width: 545px; height: 8px; border-radius: 4px; background: #808080; margin: 0 184px 0 839px; }
    .rail { width: 25px; height: 960px; background: #404040; margin-left: 3px; padding: 1px 3px 0 4px; display: flex; flex-direction: column; gap: 3px; }
    .rtab { border: 1px solid #242424; border-radius: 3px; background: #505050; width: 19px; writing-mode: vertical-rl; text-orientation: sideways; line-height: 17px; letter-spacing: -0.1px; color: #f0f0f0; }
    .lib { height: 23px; font-size: 12.5px; padding: 4px 0; }
    .prop { height: 61px; padding-top: 4px; font-size: 11px; letter-spacing: -0.15px; }
    .status { height: 24px; background: #404040; display: flex; align-items: center; padding: 0 3px 0 5px; letter-spacing: -0.46px; }
    .status .g { margin-left: 12px; width: 317px; }
    .status .v { width: 1px; height: 18px; background: #333; margin-right: 485px; }
    .status .panels { margin-left: auto; border: 1px solid #222; border-radius: 3px; background: #4c4c4c; height: 18px; line-height: 16px; width: 45px; text-align: center; color: #fff; letter-spacing: -0.3px; }
    .task { height: 40px; background: #000; display: flex; color: #fff; }
    .app { width: 48.950px; display: flex; flex-direction: column; align-items: center; padding-top: 8px; height: 40px; gap: 6px; flex: none; }
    .app.on { background: #333; }
    .app .ul { width: 40px; height: 2px; background: #f0977a; }
    .app.on .ul { width: 48px; }
    .tray { margin-left: auto; display: flex; align-items: center; padding-right: 4px; }
    .clock { text-align: center; font-size: 12.2px; line-height: 19px; width: 80px; margin: 0 8px 0 0; }
    .desk { width: 1px; height: 40px; background: #555; margin-left: 18px; }
    .strip { position: absolute; left: 899px; top: 81px; width: 373px; height: 28px; background: #404040; border-radius: 2px; display: flex; padding-left: 4px; }
    .tool { width: 28.100px; height: 28px; display: flex; align-items: center; justify-content: center; }
    .tool.more { background: linear-gradient(135deg, transparent 50%, #c8c8c8 50%) no-repeat right 1px bottom 1px / 5px 5px; }
    .tool.first { border-left: 1px solid #2a2a2a; }
    print-preview { position: absolute; left: 488px; top: 170px; }
    print-properties { position: absolute; left: 744px; top: 340px; }
    .ball { position: absolute; left: 1901px; top: 475px; width: 48px; height: 48px; border-radius: 50%; background: linear-gradient(#8ee08e, #3cbf50 45%, #48cc5c); border: 2px solid #eee; box-shadow: 0 0 0 1px #777, 0 3px 8px #0006; color: #fff; font-weight: 700; font-size: 12px; line-height: 43px; padding-left: 4px; }
    .imebar { position: absolute; left: 1786px; top: 944px; width: 66px; height: 26px; background: linear-gradient(#fff, #ececec); border: 1px solid #c8c8c8; box-shadow: 2px 3px 2px #0006; display: flex; align-items: center; padding-left: 4px; gap: 5px; color: #1f66d0; font-size: 17px; font-weight: 700; line-height: 22px; }
  `];

  private menus = [["文件", "F"], ["编辑", "E"], ["视图", "V"], ["工程", "C"], ["放置", "P"], ["设计", "D"], ["工具", "T"], ["报告", "R"], ["Window", "W"], ["帮助", "H"]];

  render() {
    return html`
      <div class="titlebar">
        <div class="quick">
          ${ico(altium)}
          ${ico(floppy("#8d8dd0", "#e8e8fa"), 15, 15)}
          ${ico(svg`<g transform="translate(4 0) scale(.8)">${floppy("#7878b8", "#c8c8ea")}</g><g transform="translate(0 3) scale(.82)">${floppy("#8d8dd0", "#e8e8fa")}</g>`, 17, 16)}
          ${ico(svg`<path d="M0 3h5l1 2h7v9H0z" fill="#c8963c"/><path d="M3 7h13l-3 8H0z" fill="#f2cf88"/><path d="M9 3q3-3 5 1M15 2v3h-3" stroke="#3a7ad0" fill="none"/>`)}
          ${ico(svg`<path d="M1 6l5-4v3c5 0 8 2 8 7-2-3-4-4-8-3.500V11z" fill="#7a7a7a"/>`)}
          ${ico(svg`<path d="M15 6l-5-4v3c-5 0-8 2-8 7 2-3 4-4 8-3.500V11z" fill="#6a6a6a"/>`)}
        </div>
        <div class="cap">层析.PrjPCB - Altium Designer (18.1.9)</div>
        <div class="find">${ico(lens, 12, 13)}<span>Search</span></div>
        <div class="win">
          ${ico(svg`<path d="M1 7h6v2H1z" fill="#fff"/>`, 9, 10)}
          ${ico(svg`<path d="M3 3V1h6v5H7" fill="none" stroke="#fff" stroke-width="1.300"/><rect x="1" y="4" width="6" height="4.500" fill="none" stroke="#fff" stroke-width="1.300"/>`, 10, 10)}
          ${ico(cross, 10, 10, "0 0 9 9")}
        </div>
      </div>
      <div class="menu">
        ${this.menus.map(([a, k]) => html`<div class="m"><span>${a}</span><span>(<u>${k}</u>)</span></div>`)}
        <div class="sp"></div>
        <div class="ic">
          ${ico(gear("#fff", "#424242"), 14, 14, "1 1 14 14")}
          ${ico(svg`<path d="M8 2q4 0 4 5 0 3 2 4H2q2-1 2-4 0-5 4-5zM6.500 12h3l-1.500 2z" fill="#fff"/>`)}
          ${ico(svg`<circle cx="8" cy="8" r="8" fill="#2a2a2a"/><path d="M8 1.500c3 0 4 2 4 4.500 0 2-1 3-2 4 0 2 2 3 2 4.500H4C4 13 6 12 6 10 5 9 4 8 4 6c0-2.500 1-4.500 4-4.500z" fill="#fff"/>`)}
          ${ico(svg`<path d="M0 1h5L2.500 4z" fill="#fff"/>`, 6, 5)}
        </div>
      </div>
      <div class="work">
        <div class="side">
          <projects-panel></projects-panel>
          <div class="ptabs"><div class="on">Projects</div><div>Navigator</div><div>SCH Filter</div></div>
        </div>
        <div class="doc">
          <div class="dtabs">
            <div>${ico(pcbIcon, 15, 13)}receive.PcbDoc</div>
            <div class="on">${ico(schIcon, 15, 13)}FPGA_transfer.SchDoc</div>
          </div>
          <div class="view">
            <schematic-canvas></schematic-canvas>
            <div class="vs">${ico(svg`<path d="M0 5h8L4 0z" fill="#888"/>`, 8, 6)}<div class="vth"></div>${ico(svg`<path d="M0 0h8L4 5z" fill="#888"/>`, 8, 6)}</div>
          </div>
          <div class="hs">${ico(svg`<path d="M5 0v8L1 4z" fill="#888"/>`, 6, 8)}<div class="hth"></div>${ico(svg`<path d="M1 0v8l4-4z" fill="#888"/>`, 6, 8)}</div>
          <div class="etabs"><div class="on">Editor</div><div class="f">FPGA_transfer</div></div>
        </div>
        <div class="rail"><div class="rtab lib">库</div><div class="rtab prop">Properties</div></div>
      </div>
      <div class="status"><span>X:12000.000mil Y:10500.000mil</span><span class="g">Grid:100mil</span><div class="v"></div><div class="v"></div><div class="panels">Panels</div></div>
      <div class="task">
        ${apps.map((a) => html`<div class=${classMap({ app: true, on: !!a.on })}>${ico(a.i, 24, 24)}${a.run ? html`<div class="ul"></div>` : ""}</div>`)}
        <div class="tray">
          ${ico(svg`<path d="M2 11l6-6 6 6" fill="none" stroke="#fff" stroke-width="1.400"/>`, 18, 16)}
          ${ico(svg`<path d="M8 4.500h13v9H7M14 13.500v3M10 16.500h8" fill="none" stroke="#fff" stroke-width="1.300"/><rect x="4.500" y="4.500" width="4" height="5" fill="none" stroke="#fff"/><path d="M6.500 9v7" stroke="#fff"/>`, 26, 20)}
          ${ico(svg`<path d="M3.500 7.500h3l4-4v13l-4-4h-3z" fill="none" stroke="#fff" stroke-width="1.200"/><path d="M13 7.500q1.500 2.500 0 5M15 5.500q3 4.500 0 9" fill="none" stroke="#fff"/><path d="M17 4q4 6 0 12" fill="none" stroke="#777"/>`, 24, 20)}
          ${ico(svg`<path d="M6 14c2-7 5-11 7-11s0 4-3 8-5 5-5 2M3 9c-2 3-1 6 2 6s6-2 8-5M9 9l6-1-3 4" fill="none" stroke="#fff" stroke-width="1.300"/>`, 30, 18, "-6 0 28 18")}
          ${ico(ime, 35, 16, "-16 0 44 20")}
          <div class="clock">22:22<br>2018/10/31</div>
          ${ico(svg`<path d="M1.500 1.500h15v11H12l-3 3-3-3H1.500z" fill="none" stroke="#fff" stroke-width="1.300"/>`, 18, 18)}
          <div class="desk"></div>
        </div>
      </div>
      <div class="strip">${strip.map(([g, more], i) => html`<div class=${classMap({ tool: true, more, first: i === 4 })}>${ico(g)}</div>`)}</div>
      <div class="imebar">${ico(svg`<circle cx="19" cy="12" r="6" fill="#c01020"/>${ime}`, 27, 22, "0 0 26 20")}英${ico(svg`<path d="M1 1l5 7-5 7z" fill="#ddd" stroke="#bbb"/>`, 7, 16)}</div>
      <print-preview></print-preview>
      <print-properties></print-properties>
      <div class="ball">57</div>`;
  }
}
